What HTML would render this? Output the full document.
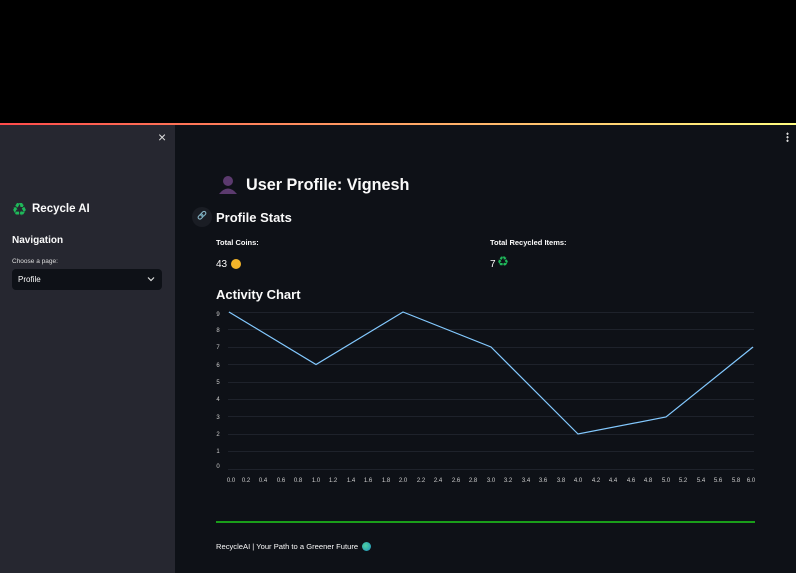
<!DOCTYPE html>
<html><head><meta charset="utf-8"><style>
*{margin:0;padding:0;box-sizing:border-box}
body{width:796px;height:573px;overflow:hidden;background:#0e1117;font-family:"Liberation Sans","Noto Sans CJK SC",sans-serif;color:#fafafa;position:relative}
.a{position:absolute;white-space:nowrap;line-height:1.2}
</style></head><body>
<div class="a" style="left:0;top:0;width:796px;height:123px;background:#000"></div>
<div class="a" style="left:0;top:123px;width:796px;height:2px;background:linear-gradient(90deg,#ff4b4b,#fffd80)"></div>
<div class="a" style="left:0;top:125px;width:175px;height:448px;background:#262730"></div>
<div class="a" style="left:158px;top:129px;font-size:14px;color:#ddd">×</div>
<div class="a" style="left:13px;top:202px;font-size:13px;color:#1fb85a">♻</div>
<div class="a" style="left:32px;top:203px;font-size:11.5px;font-weight:bold">Recycle AI</div>
<div class="a" style="left:12px;top:235px;font-size:10px;font-weight:bold">Navigation</div>
<div class="a" style="left:12px;top:258px;font-size:6.5px;color:#ddd">Choose a page:</div>
<div class="a" style="left:12px;top:269px;width:150px;height:21px;background:#0e1117;border-radius:4px"></div>
<div class="a" style="left:18px;top:275px;font-size:8px">Profile</div>
<svg class="a" style="left:147px;top:276px" width="8" height="6"><path d="M1 1.5L4 4.5L7 1.5" stroke="#ddd" stroke-width="1.2" fill="none"/></svg>
<div class="a" style="left:786px;top:132px;width:3px;height:10px;background:radial-gradient(circle,#ddd 1px,transparent 1.2px) 0 0/3px 3.5px"></div>
<svg class="a" style="left:218px;top:175px" width="20" height="20"><circle cx="10" cy="6" r="5" fill="#5b3a6e"/><path d="M1 19Q10 8 19 19Z" fill="#5b3a6e"/></svg>
<div class="a" style="left:246px;top:176px;font-size:16.2px;font-weight:bold">User Profile: Vignesh</div>
<div class="a" style="left:192px;top:207px;width:20px;height:20px;border-radius:50%;background:#1a1d24"></div>
<div class="a" style="left:197px;top:211px;font-size:8px;color:#888">🔗</div>
<div class="a" style="left:216px;top:210px;font-size:13px;font-weight:bold">Profile Stats</div>
<div class="a" style="left:216px;top:238px;font-size:7.5px;font-weight:bold">Total Coins:</div>
<div class="a" style="left:216px;top:259px;font-size:10px">43</div>
<div class="a" style="left:231px;top:259px;width:10px;height:10px;border-radius:50%;background:#f4b52a"></div>
<div class="a" style="left:490px;top:238px;font-size:7.5px;font-weight:bold">Total Recycled Items:</div>
<div class="a" style="left:490px;top:259px;font-size:10px">7</div>
<div class="a" style="left:498px;top:257px;font-size:10px;color:#1fb85a">♻</div>
<div class="a" style="left:216px;top:287px;font-size:13px;font-weight:bold">Activity Chart</div>
<svg class="a" style="left:0;top:0" width="796" height="573" font-family="Liberation Sans,sans-serif" font-size="6" fill="#ccc">
<g stroke="#1e222b" stroke-width="1">
<line x1="228" x2="754" y1="312.5" y2="312.5"/><line x1="228" x2="754" y1="329.5" y2="329.5"/><line x1="228" x2="754" y1="347.5" y2="347.5"/><line x1="228" x2="754" y1="364.5" y2="364.5"/><line x1="228" x2="754" y1="382.5" y2="382.5"/><line x1="228" x2="754" y1="399.5" y2="399.5"/><line x1="228" x2="754" y1="416.5" y2="416.5"/><line x1="228" x2="754" y1="434.5" y2="434.5"/><line x1="228" x2="754" y1="451.5" y2="451.5"/><line x1="228" x2="754" y1="469.5" y2="469.5"/>
</g>
<g text-anchor="middle">
<text x="218" y="316">9</text><text x="218" y="332">8</text><text x="218" y="349">7</text><text x="218" y="367">6</text><text x="218" y="384">5</text><text x="218" y="401">4</text><text x="218" y="419">3</text><text x="218" y="436">2</text><text x="218" y="453">1</text><text x="218" y="468">0</text>
<text x="231" y="482">0.0</text><text x="246" y="482">0.2</text><text x="263" y="482">0.4</text><text x="281" y="482">0.6</text><text x="298" y="482">0.8</text><text x="316" y="482">1.0</text><text x="333" y="482">1.2</text><text x="351" y="482">1.4</text><text x="368" y="482">1.6</text><text x="386" y="482">1.8</text><text x="403" y="482">2.0</text><text x="421" y="482">2.2</text><text x="438" y="482">2.4</text><text x="456" y="482">2.6</text><text x="473" y="482">2.8</text><text x="491" y="482">3.0</text><text x="508" y="482">3.2</text><text x="526" y="482">3.4</text><text x="543" y="482">3.6</text><text x="561" y="482">3.8</text><text x="578" y="482">4.0</text><text x="596" y="482">4.2</text><text x="613" y="482">4.4</text><text x="631" y="482">4.6</text><text x="648" y="482">4.8</text><text x="666" y="482">5.0</text><text x="683" y="482">5.2</text><text x="701" y="482">5.4</text><text x="718" y="482">5.6</text><text x="736" y="482">5.8</text><text x="751" y="482">6.0</text>
</g>
<polyline points="229,312 316,364.5 403,312 491,347 578,434 666,417 753,347" fill="none" stroke="#83c9ff" stroke-width="1.2"/>
<line x1="216" x2="755" y1="522" y2="522" stroke="#1a9e1a" stroke-width="2"/>
</svg>
<div class="a" style="left:216px;top:542px;font-size:7.6px">RecycleAI | Your Path to a Greener Future</div>
<div class="a" style="left:362px;top:542px;width:9px;height:9px;border-radius:50%;background:radial-gradient(circle at 40% 40%,#4fd1a0,#1a8fbf)"></div>
</body></html>
